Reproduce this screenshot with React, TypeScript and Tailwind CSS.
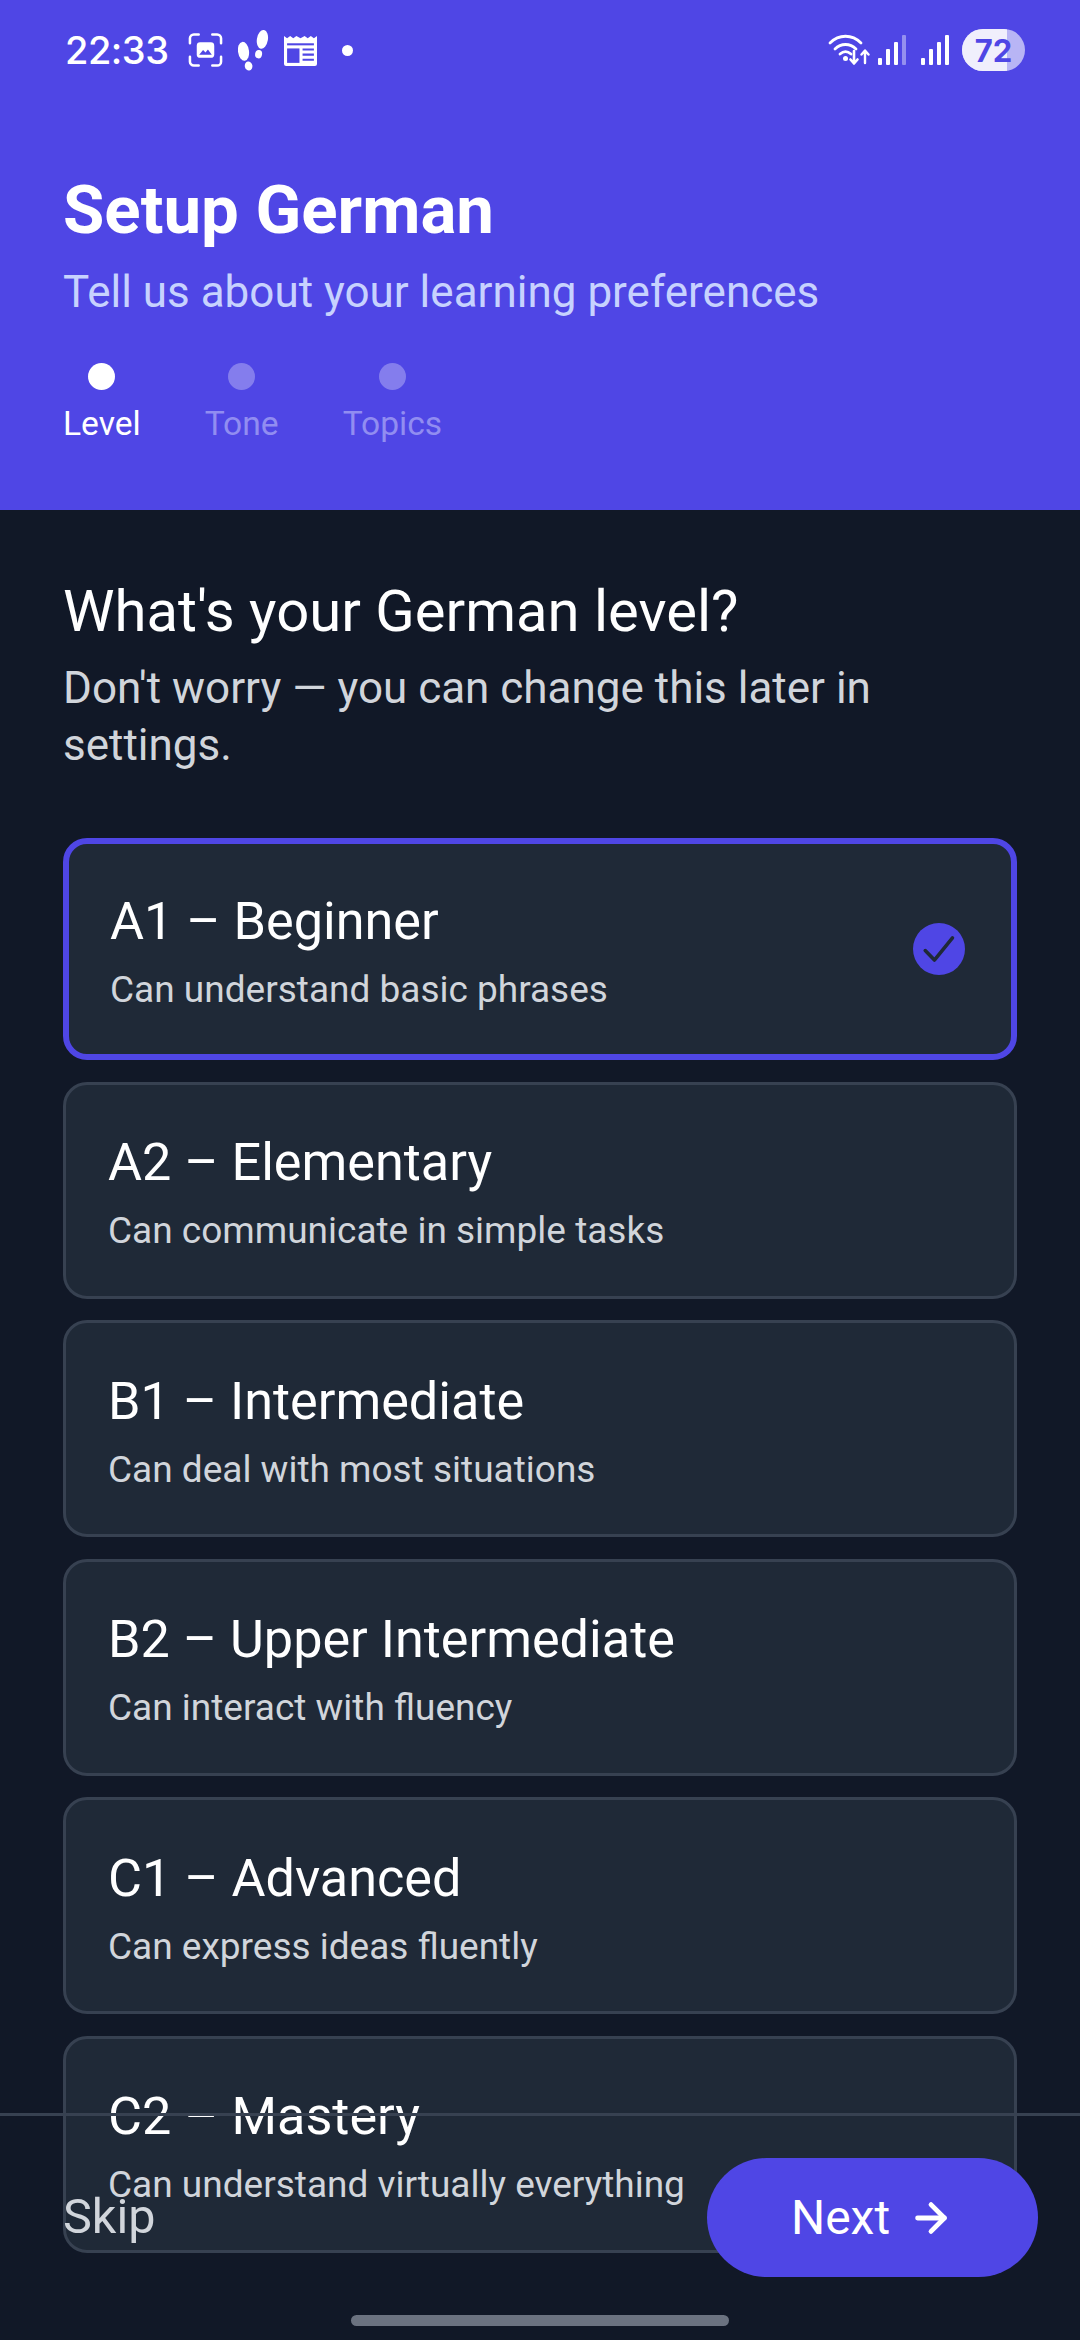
import React from 'react';
import { ArrowRight } from 'lucide-react';

const levels = [
  { id: 'a1', title: 'A1 – Beginner', desc: 'Can understand basic phrases', selected: true },
  { id: 'a2', title: 'A2 – Elementary', desc: 'Can communicate in simple tasks' },
  { id: 'b1', title: 'B1 – Intermediate', desc: 'Can deal with most situations' },
  { id: 'b2', title: 'B2 – Upper Intermediate', desc: 'Can interact with fluency' },
  { id: 'c1', title: 'C1 – Advanced', desc: 'Can express ideas fluently' },
  { id: 'c2', title: 'C2 – Mastery', desc: 'Can understand virtually everything' },
];

const steps = [
  { label: 'Level', active: true },
  { label: 'Tone' },
  { label: 'Topics' },
];

function ScreenshotIcon() {
  return (
    <svg width="35" height="36" viewBox="0 0 36 36" fill="none">
      <path d="M2 11V6a4 4 0 0 1 4-4h5M25 2h5a4 4 0 0 1 4 4v5M34 25v5a4 4 0 0 1-4 4h-5M11 34H6a4 4 0 0 1-4-4v-5" stroke="white" strokeWidth="2.6" strokeLinecap="round" />
      <rect x="9" y="10" width="18" height="16" rx="3.5" fill="white" />
      <path d="M11.5 23l4-5 2.5 2.5 2.5-3 4 5.500z" fill="#4f46e5" />
    </svg>
  );
}

function StepsIcon() {
  return (
    <svg width="31" height="41" viewBox="0 0 31 41" fill="white">
      <ellipse cx="5.500" cy="21.300" rx="5.500" ry="9.500" transform="rotate(-8 5.500 21.300)" />
      <ellipse cx="10.600" cy="36" rx="3.800" ry="4.500" transform="rotate(-10 10.600 36)" />
      <ellipse cx="24.400" cy="9.400" rx="5.500" ry="9.500" transform="rotate(10 24.400 9.400)" />
      <ellipse cx="20.600" cy="24.200" rx="3.500" ry="4.200" transform="rotate(10 20.600 24.200)" />
    </svg>
  );
}

function NewsIcon() {
  return (
    <svg width="33" height="31" viewBox="0 0 32 30" fill="none">
      <path d="M0 1l3 2 3-2 3 2 3-2 4 2 4-2 3 2 3-2 3 2 3-2v27a2 2 0 0 1-2 2H2a2 2 0 0 1-2-2z" fill="white" />
      <rect x="3" y="8" width="26" height="2" fill="#4f46e5" />
      <rect x="3" y="13" width="12" height="14" fill="#4f46e5" />
      <path d="M18 14h11M18 19h11M18 24h11" stroke="#4f46e5" strokeWidth="2" />
    </svg>
  );
}

function WifiIcon() {
  return (
    <svg width="42" height="32" viewBox="0 0 42 32" fill="none">
      <path d="M2 9C11 0 24 0 33 9M7 15c6-6 15-6 21 0M12 20c3.500-3 7.500-3 11 0" stroke="white" strokeWidth="2.800" strokeLinecap="round" />
      <circle cx="17.500" cy="24.500" r="2.500" fill="white" />
      <path d="M26 17v12M22.500 25.500l3.500 4 3.500-4" stroke="white" strokeWidth="2.600" strokeLinecap="round" strokeLinejoin="round" />
      <path d="M37 29V17M33.500 20.500l3.500-4 3.500 4" stroke="white" strokeWidth="2.400" strokeLinecap="round" strokeLinejoin="round" />
    </svg>
  );
}

function SignalIcon({ dimLast }: { dimLast?: boolean }) {
  return (
    <svg width="28" height="30" viewBox="0 0 28 30" fill="white">
      <rect x="0" y="23" width="4" height="7" rx="1" />
      <rect x="8" y="14" width="4" height="16" rx="1" />
      <rect x="16" y="7" width="4" height="23" rx="1" />
      <rect x="24" y="0" width="4" height="30" rx="1" opacity={dimLast ? 0.4 : 1} />
    </svg>
  );
}

function CheckBadge() {
  return (
    <svg width="52" height="52" viewBox="0 0 51 51" fill="none" className="-mt-[7px]">
      <circle cx="25.500" cy="25.500" r="25.500" fill="#4f46e5" />
      <path d="M12 27l9 9.300 17.700-21.600" stroke="#1f2937" strokeWidth="3.500" strokeLinecap="round" strokeLinejoin="round" />
    </svg>
  );
}

export default function App() {
  return (
    <div className="relative h-[2340px] w-[1080px] overflow-hidden bg-[#111827] font-['Roboto',sans-serif]">
      <header className="h-[510px] bg-[#4f46e5] px-[63px]">
        <div className="-mx-[63px] flex h-[100px] items-center justify-between pl-[65px] pr-[55px]">
          <div className="flex items-center">
            <span className="font-['Inter',sans-serif] text-[38px] font-medium leading-none tracking-[-0.5px] text-white">22:33</span>
            <div className="ml-[19px] flex items-center">
              <ScreenshotIcon />
              <span className="ml-[15px]"><StepsIcon /></span>
              <span className="ml-[15px]"><NewsIcon /></span>
            </div>
            <span className="ml-[25px] h-[11px] w-[11px] rounded-full bg-white" />
          </div>
          <div className="flex items-center">
            <WifiIcon />
            <div className="ml-[8px] flex items-center gap-[15px]">
              <SignalIcon dimLast />
              <SignalIcon />
            </div>
            <div className="relative ml-[13px] flex h-[42px] w-[63px] items-center justify-center overflow-hidden rounded-full bg-white/60">
              <div className="absolute inset-y-0 left-0 w-[45px] bg-[#f0effc]" />
              <span className="relative font-['Inter',sans-serif] text-[31px] font-bold leading-none text-[#4f46e5]">72</span>
            </div>
          </div>
        </div>

        <h1 className="mt-[70px] text-[67.200px] font-bold leading-[80px] text-white">Setup German</h1>
        <p className="mt-[14px] text-[44px] leading-[56px] text-[#c7d2fe]">Tell us about your learning preferences</p>

        <div className="mt-[43px] flex gap-[64px]">
          {steps.map((step) => (
            <div key={step.label} className="flex flex-col items-center">
              <span className={`h-[27px] w-[27px] rounded-full ${step.active ? 'bg-white' : 'bg-white/30'}`} />
              <span className={`mt-[12px] text-[33.600px] leading-[44px] ${step.active ? 'text-white' : 'text-[#918df1]'}`}>{step.label}</span>
            </div>
          ))}
        </div>
      </header>

      <main className="px-[63px] pt-[65px]">
        <h2 className="text-[58px] leading-[72px] text-white">What's your German level?</h2>
        <p className="mt-[13px] text-[44px] leading-[57px] text-[#d1d5db]">Don't worry — you can change this later in settings.</p>

        <div className="mt-[64px] flex flex-col gap-[21.500px]">
          {levels.map((level) =>
            <div
              key={level.id}
              className={`flex items-center justify-between rounded-[24px] bg-[#1f2937] pt-[6px] ${level.selected ? 'h-[222px] border-[6px] border-[#4f46e5] pl-[41px] pr-[46px]' : 'h-[217px] border-[3px] border-[#374151] pl-[42px] pr-[48px]'}`}
            >
              <div>
                <div className="text-[52.200px] leading-[64px] text-white">{level.title}</div>
                <div className="mt-[12px] text-[37px] leading-[48px] text-[#d1d5db]">{level.desc}</div>
              </div>
              {level.selected && <CheckBadge />}
            </div>
          )}
        </div>
      </main>

      <footer className="absolute inset-x-0 top-[2113px] flex h-[180px] items-start justify-between border-t-[3px] border-[#374151] pl-[63px] pr-[42px] pt-[42px]">
        <span className="mt-[27px] text-[48.500px] leading-[64px] text-[#d1d5db]">Skip</span>
        <button className="flex h-[119px] w-[331px] items-center justify-center gap-[18px] rounded-full bg-[#4f46e5] text-[48px] text-white">
          Next
          <ArrowRight size={46} strokeWidth={2.500} />
        </button>
      </footer>

      <div className="absolute bottom-[14px] left-1/2 h-[11px] w-[378px] -translate-x-1/2 rounded-full bg-[#6b7280]" />
    </div>
  );
}
